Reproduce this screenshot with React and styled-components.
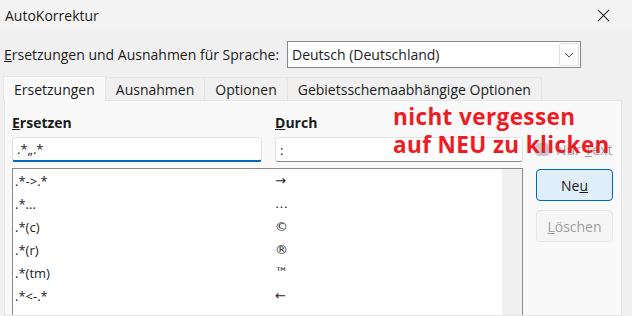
import React from 'react';
import styled, { createGlobalStyle } from 'styled-components';

const GlobalStyle = createGlobalStyle`
  body {
    margin: 0;
    background: #f0f0f0;
    font-family: "Open Sans", "Noto Sans", sans-serif;
    color: #1b1b1b;
  }
`;

const rows = [
  ['.*->.*', '→'],
  ['.*...', '…'],
  ['.*(c)', '©'],
  ['.*(r)', '®'],
  ['.*(tm)', '™'],
  ['.*<-.*', '←'],
];

const App = () => {
  return (
    <Window>
      <GlobalStyle />
      <TitleBar>
        <span>AutoKorrektur</span>
        <CloseIcon viewBox="0 0 14 14">
          <path d="M1 1 L13 13 M13 1 L1 13" stroke="#1b1b1b" strokeWidth="1.1" fill="none" />
        </CloseIcon>
      </TitleBar>

      <LangRow>
        <Label><u>E</u>rsetzungen und Ausnahmen für Sprache:</Label>
        <Select>
          <span>Deutsch (Deutschland)</span>
          <DropButton>
            <svg width="10" height="6" viewBox="0 0 10 6">
              <path d="M1 1 L5 5 L9 1" stroke="#555" strokeWidth="1" fill="none" />
            </svg>
          </DropButton>
        </Select>
      </LangRow>

      <Tabs>
        <Tab $active>Ersetzungen</Tab>
        <Tab>Ausnahmen</Tab>
        <Tab>Optionen</Tab>
        <Tab>Gebietsschemaabhängige Optionen</Tab>
      </Tabs>

      <Panel>
        <MainArea>
          <Columns>
            <Heading><u>E</u>rsetzen</Heading>
            <Heading><u>D</u>urch</Heading>
            <Input $focused>.*„.*</Input>
            <Input>:</Input>
          </Columns>
          <List>
            <ListBody>
              {rows.map(([from, to]) => (
                <Row key={from}>
                  <Cell>{from}</Cell>
                  <Symbol>{to}</Symbol>
                </Row>
              ))}
            </ListBody>
            <Track />
          </List>
        </MainArea>

        <Side>
          <CheckRow>
            <Box />
            <span>Nur <u>T</u>ext</span>
          </CheckRow>
          <Button $primary>Ne<u>u</u></Button>
          <Button $disabled><u>L</u>öschen</Button>
        </Side>

        <Note>
          nicht vergessen
          <br />
          auf NEU zu klicken
        </Note>
      </Panel>
    </Window>
  );
};

export default App;

// Styled Components

const Window = styled.div`
  width: 632px;
  height: 316px;
  overflow: hidden;
  display: flex;
  flex-direction: column;
  font-size: 14px;
`;

const TitleBar = styled.div`
  height: 31px;
  display: flex;
  align-items: center;
  justify-content: space-between;
  padding: 0 22px 0 5px;
  background: #f3f3f3;
  font-size: 14px;
`;

const CloseIcon = styled.svg`
  width: 13px;
  height: 13px;
`;

const LangRow = styled.div`
  display: flex;
  align-items: center;
  margin-top: 10px;
  padding-left: 4px;
  height: 27px;
`;

const Label = styled.div`
  width: 283px;
  white-space: nowrap;
`;

const Select = styled.div`
  width: 288px;
  height: 25px;
  border: 1px solid #8a8a8a;
  background: #ffffff;
  display: flex;
  align-items: center;
  justify-content: space-between;
  padding-left: 4px;
  box-sizing: content-box;
`;

const DropButton = styled.div`
  width: 20px;
  height: 23px;
  margin-right: 1px;
  border: 1px solid #e0e0e0;
  border-radius: 2px;
  background: #fbfbfb;
  display: flex;
  align-items: center;
  justify-content: center;
  box-sizing: border-box;
`;

const Tabs = styled.div`
  display: flex;
  align-items: flex-end;
  margin-top: 9px;
  padding-left: 4px;
  height: 23px;
`;

const Tab = styled.div`
  height: ${(p) => (p.$active ? '24px' : '22px')};
  padding: 0 10px;
  display: flex;
  align-items: center;
  border: 1px solid #e5e5e5;
  border-bottom: none;
  margin-left: -1px;
  background: ${(p) => (p.$active ? '#f9f9f9' : '#f0f0f0')};
  white-space: nowrap;
  position: relative;
  z-index: ${(p) => (p.$active ? 1 : 0)};
  margin-bottom: ${(p) => (p.$active ? '-1px' : '0')};
`;

const Panel = styled.div`
  position: relative;
  flex: 1;
  margin: 0 10px 0 4px;
  border: 1px solid #e5e5e5;
  background: #f9f9f9;
  display: flex;
  padding: 10px 0 0 7px;
  gap: 13px;
`;

const MainArea = styled.div`
  width: 511px;
  display: flex;
  flex-direction: column;
`;

const Columns = styled.div`
  display: grid;
  grid-template-columns: 250px 248px;
  column-gap: 13px;
  row-gap: 4px;
`;

const Heading = styled.div`
  font-weight: 700;
  height: 22px;
  display: flex;
  align-items: center;
`;

const Input = styled.div`
  height: 25px;
  box-sizing: border-box;
  border: 1px solid #e3e3e3;
  border-bottom: ${(p) => (p.$focused ? '2px solid #0067c0' : '1px solid #8a8a8a')};
  border-radius: 3px;
  background: #ffffff;
  padding: 0 4px;
  display: flex;
  align-items: center;
  font-size: 13px;
`;

const List = styled.div`
  margin-top: 6px;
  flex: 1;
  border: 1px solid #8a8a8a;
  border-bottom: none;
  background: #ffffff;
  display: flex;
`;

const ListBody = styled.div`
  flex: 1;
  padding-top: 0;
`;

const Row = styled.div`
  display: grid;
  grid-template-columns: 260px 1fr;
  height: 23px;
  align-items: center;
  padding-left: 2px;
  font-size: 13px;
`;

const Cell = styled.span`
  white-space: nowrap;
`;

const Symbol = styled.span`
  font-family: "DejaVu Sans", sans-serif;
  font-size: 13px;
`;

const Track = styled.div`
  width: 20px;
  background: #f0f0f0;
`;

const Side = styled.div`
  width: 77px;
  display: flex;
  flex-direction: column;
  padding-top: 26px;
`;

const CheckRow = styled.div`
  display: flex;
  align-items: center;
  gap: 7px;
  height: 24px;
  color: #a0a0a0;
  white-space: nowrap;
`;

const Box = styled.div`
  width: 13px;
  height: 13px;
  border-radius: 3px;
  background: #c8c8c8;
`;

const Button = styled.div`
  height: 32px;
  box-sizing: border-box;
  margin-top: ${(p) => (p.$primary ? '8px' : '9px')};
  border: 1px solid ${(p) => (p.$primary ? '#0067c0' : '#e5e5e5')};
  border-radius: 4px;
  background: ${(p) => (p.$primary ? '#e0eef9' : '#f5f5f5')};
  color: ${(p) => (p.$disabled ? '#9d9d9d' : '#1b1b1b')};
  display: flex;
  align-items: center;
  justify-content: center;
`;

const Note = styled.div`
  position: absolute;
  left: 388px;
  top: 2px;
  color: #ed1c24;
  font-weight: 700;
  font-size: 22.5px;
  line-height: 28px;
  letter-spacing: 0.4px;
`;
